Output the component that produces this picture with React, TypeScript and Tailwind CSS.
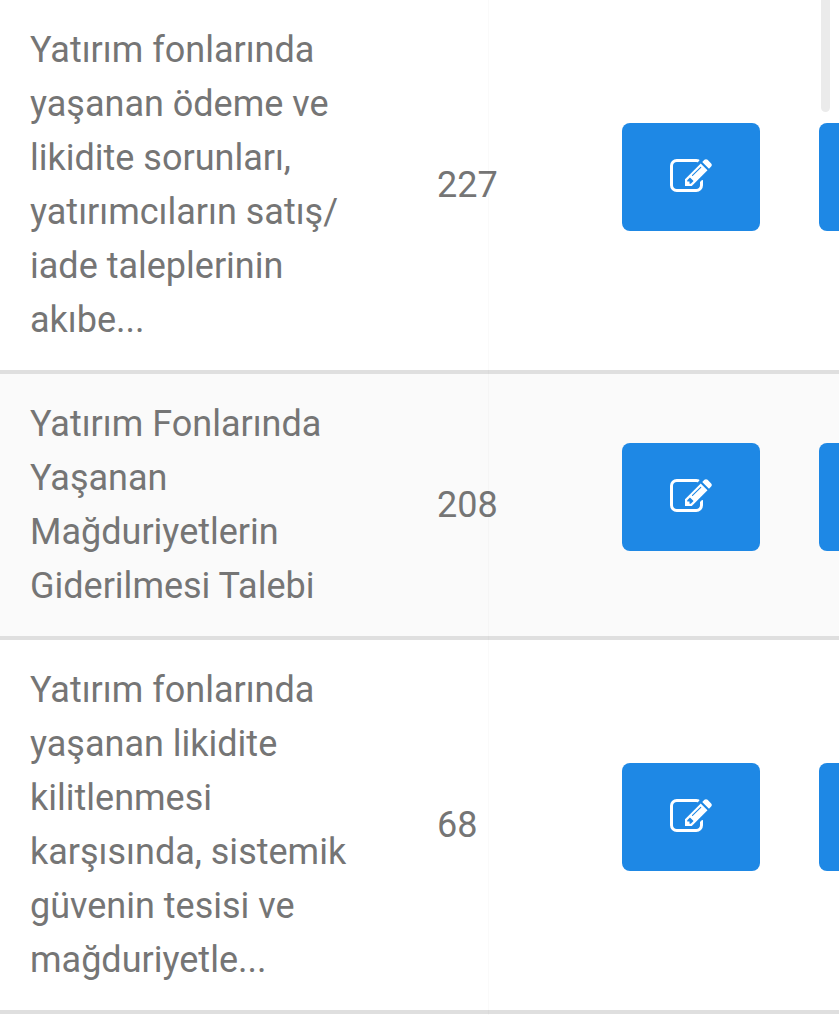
type Petition = {
  id: number;
  title: string;
  count: number;
};

const PETITIONS: Petition[] = [
  {
    id: 1,
    title: "Yatırım fonlarında yaşanan ödeme ve likidite sorunları, yatırımcıların satış/ iade taleplerinin akıbe...",
    count: 227,
  },
  {
    id: 2,
    title: "Yatırım Fonlarında Yaşanan Mağduriyetlerin Giderilmesi Talebi",
    count: 208,
  },
  {
    id: 3,
    title: "Yatırım fonlarında yaşanan likidite kilitlenmesi karşısında, sistemik güvenin tesisi ve mağduriyetle...",
    count: 68,
  },
];

function EditIcon() {
  return (
    <svg viewBox="0 0 1792 1792" className="h-[42px] w-[42px] fill-current" aria-hidden="true">
      <path d="M888 1184l116-116-152-152-116 116v56h96v96h56zm440-720q-16-16-33 1l-350 350q-17 17-1 33t33-1l350-350q17-17 1-33zm80 594v190q0 119-84.5 203.5t-203.5 84.5h-832q-119 0-203.5-84.5t-84.5-203.5v-832q0-119 84.5-203.5t203.5-84.5h832q63 0 117 25 15 7 18 23 3 17-9 29l-49 49q-14 14-32 8-23-6-45-6h-832q-66 0-113 47t-47 113v832q0 66 47 113t113 47h832q66 0 113-47t47-113v-126q0-13 9-22l64-64q15-15 35-7t20 29zm-96-738l288 288-672 672h-288v-288zm444 132l-92 92-288-288 92-92q28-28 68-28t68 28l152 152q28 28 28 68t-28 68z" />
    </svg>
  );
}

function PetitionRow({ petition }: { petition: Petition }) {
  return (
    <tr className="border-b-4 border-[#dfdfdf] even:bg-[#fafafa]">
      <td className="px-[30px] py-[23px]">{petition.title}</td>
      <td className="px-[30px] py-[23px]">{petition.count}</td>
      <td className="pb-4 pl-[30px]">
        <button
          type="button"
          aria-label={`Düzenle: ${petition.title}`}
          className="flex h-[108px] w-[138px] items-center justify-center rounded-lg bg-[#1e88e5] text-white"
        >
          <EditIcon />
        </button>
      </td>
      <td className="pb-4 pl-[30px]">
        <button
          type="button"
          aria-label={`Detay: ${petition.title}`}
          className="block h-[108px] w-[138px] rounded-lg bg-[#1e88e5]"
        />
      </td>
    </tr>
  );
}

export default function App() {
  return (
    <div className="relative min-h-screen overflow-hidden bg-white font-[Roboto,sans-serif] text-[36px] leading-[54px] text-[#757575]">
      <table className="w-[986px] table-fixed border-collapse">
        <colgroup>
          <col className="w-[407px]" />
          <col className="w-[185px]" />
          <col className="w-[197px]" />
          <col className="w-[197px]" />
        </colgroup>
        <tbody>
          {PETITIONS.map((petition) => (
            <PetitionRow key={petition.id} petition={petition} />
          ))}
        </tbody>
      </table>

      <div className="pointer-events-none absolute inset-y-0 left-[488px] w-px bg-black/[0.02]" />

      {/* Scroll thumb */}
      <div className="pointer-events-none absolute right-[9px] top-0 h-28 w-[9px] rounded-b-full bg-[#ebebeb]" />
    </div>
  );
}
